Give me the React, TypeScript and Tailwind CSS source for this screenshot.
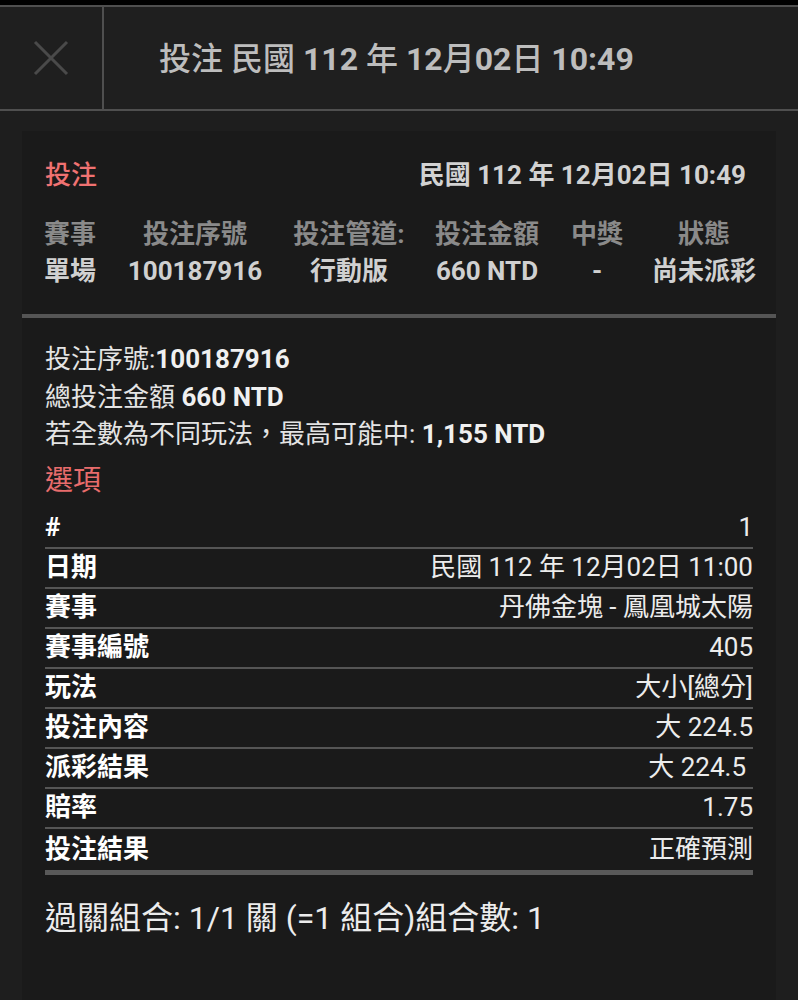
import React from "react";

const font = { fontFamily: 'Roboto, "Noto Sans CJK TC", "Noto Sans", sans-serif' };

const rows: [string, string, string?][] = [
  ["#", "1"],
  ["日期", "民國 112 年 12月02日 11:00"],
  ["賽事", "丹佛金塊 - 鳳凰城太陽"],
  ["賽事編號", "405"],
  ["玩法", "大小[總分]"],
  ["投注內容", "大 224.5"],
  ["派彩結果", "大 224.5", "pad"],
  ["賠率", "1.75"],
  ["投注結果", "正確預測"],
];

const cols = [
  { w: "w-[50px]", h: "賽事", v: "單場" },
  { w: "w-[200px]", h: "投注序號", v: "100187916" },
  { w: "w-[108px]", h: "投注管道:", v: "行動版" },
  { w: "w-[168px]", h: "投注金額", v: "660 NTD" },
  { w: "w-[52px]", h: "中獎", v: "-" },
  { w: "w-[162px]", h: "狀態", v: "尚未派彩" },
];

export default function App() {
  return (
    <div className="w-[798px] h-[1000px] overflow-hidden bg-[#1e1e1e] flex flex-col" style={font}>
      <div className="h-[5px] bg-black flex-none" />
      <div className="flex h-[106px] flex-none border-t-2 border-b-2 border-[#4f4f4f] bg-[#1f1f1f]">
        <div className="w-[104px] flex-none flex items-center justify-center border-r-2 border-[#4f4f4f]">
          <svg width="36" height="36" viewBox="0 0 36 36">
            <path d="M2 2 L34 34 M34 2 L2 34" stroke="#4a4a4a" strokeWidth="3" />
          </svg>
        </div>
        <div className="flex items-center pl-[55px] pt-[2px] text-[32px] text-[#bdbdbd] font-medium whitespace-pre">
          投注 民國 <span className="font-bold">112</span> 年 <span className="font-bold">12</span>月<span className="font-bold">02</span>日 <span className="font-bold">10:49</span>
        </div>
      </div>

      <div className="mt-[20px] mx-[22px] flex-1 bg-[#1a1a1a] pt-[26px]">
        <div className="px-[23px]">
          <div className="flex justify-between items-center h-[36px] text-[26px] leading-[36px]">
            <span className="text-[#f07272] font-medium">投注</span>
            <span className="text-[#d2d2d2] font-bold pr-[7px]">民國 112 年 12月02日 10:49</span>
          </div>
          <div className="mt-[23px] flex w-[740px] text-[26px] leading-[37px] font-bold text-[#8a8a8a]">
            {cols.map((c) => (
              <div key={c.h} className={`${c.w} flex-none flex justify-center whitespace-nowrap`}>{c.h}</div>
            ))}
          </div>
          <div className="flex w-[740px] text-[26px] leading-[37px] font-bold text-[#d0d0d0]">
            {cols.map((c) => (
              <div key={c.h} className={`${c.w} flex-none flex justify-center whitespace-nowrap`}>{c.v}</div>
            ))}
          </div>
        </div>

        <div className="mt-[24px] h-[4px] bg-[#555555]" />

        <div className="px-[23px] pt-[23px]">
          <div className="text-[26px] leading-[37.5px] text-[#e4e4e4]">
            <div>投注序號:<span className="font-bold text-[#f0f0f0]">100187916</span></div>
            <div>總投注金額 <span className="font-bold text-[#f0f0f0]">660 NTD</span></div>
            <div>若全數為不同玩法，最高可能中: <span className="font-bold text-[#f0f0f0]">1,155 NTD</span></div>
          </div>
          <div className="text-[28px] leading-[36px] mt-[9px] text-[#e86c6c]">選項</div>

          <div className="mt-[10px]">
            {rows.map(([k, v, pad], i) => (
              <div
                key={k}
                className={`flex justify-between items-center text-[26px] ${
                  i === rows.length - 1 ? "h-[46px] border-b-[5px] border-[#595959]" : "h-[40px] border-b-2 border-[#555555]"
                }`}
              >
                <span className="font-bold text-white">{k}</span>
                <span className={`text-[#ececec] ${pad ? "pr-[7px]" : ""}`}>{v}</span>
              </div>
            ))}
          </div>

          <div className="mt-[23px] text-[32px] leading-[40px] text-[#ececec]">過關組合: 1/1 關 (=1 組合)組合數: 1</div>
        </div>
      </div>
    </div>
  );
}
